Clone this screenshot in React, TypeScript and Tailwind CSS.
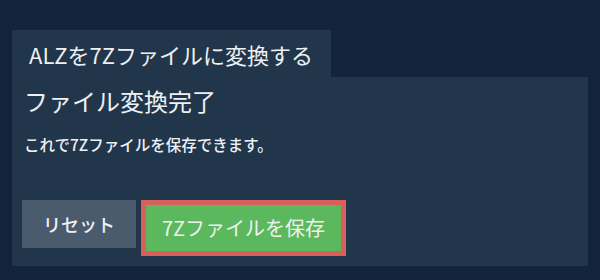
export default function App() {
  return (
    <div
      className="w-[600px] h-[280px] bg-[#12233a] px-[12px] pt-[30px] text-[#eef1f4]"
      style={{ fontFamily: '"Noto Sans CJK JP", "Noto Sans", sans-serif' }}
    >
      <div className="flex">
        <div className="w-[319px] h-[47px] bg-[#22364b] pl-[17px] flex items-center text-[22px] leading-none">
          ALZを7Zファイルに変換する
        </div>
      </div>
      <div className="h-[189px] bg-[#22364b] px-[10px] pt-[6px]">
        <h2 className="pl-[2px] text-[24px] leading-[36px] font-normal">ファイル変換完了</h2>
        <p className="pl-[2px] mt-[14px] text-[15.5px] leading-[22px] font-medium">
          これで7Zファイルを保存できます。
        </p>
        <div className="flex items-start gap-[5px] mt-[45px]">
          <button className="h-[48px] w-[114px] bg-[#4b5b6e] text-[18px] font-medium">リセット</button>
          <button className="h-[56px] w-[205px] bg-[#5cb85c] border-[5px] border-[#d9605a] text-[20px]">
            7Zファイルを保存
          </button>
        </div>
      </div>
    </div>
  );
}
